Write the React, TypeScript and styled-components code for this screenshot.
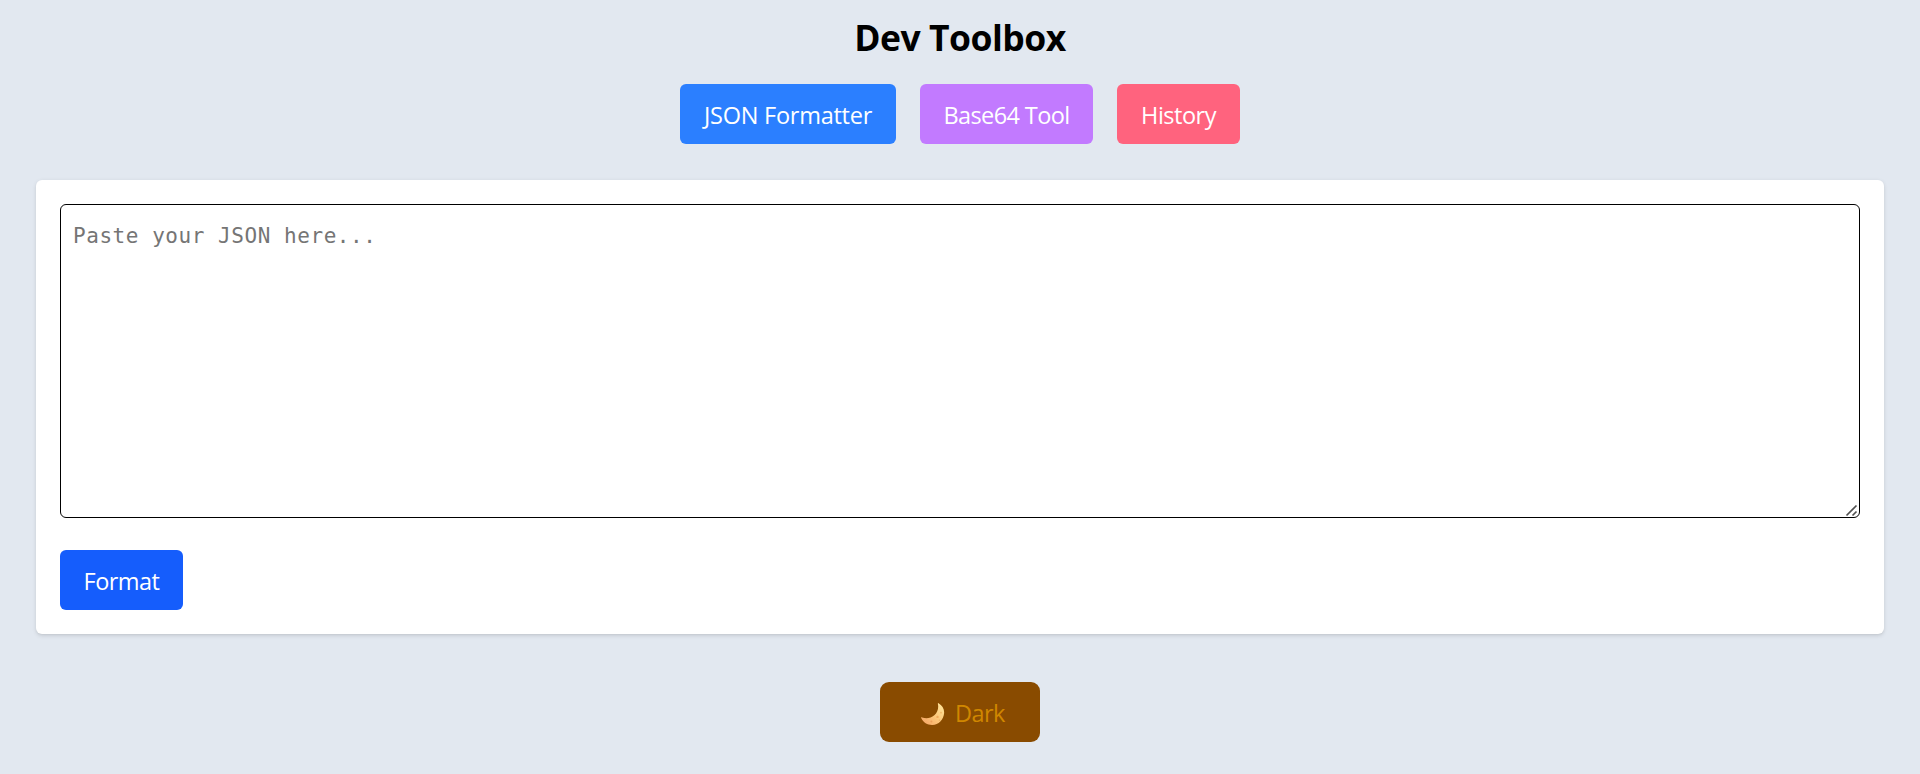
import React, { useState } from "react";
import styled, { createGlobalStyle } from "styled-components";

const GlobalStyle = createGlobalStyle`
  *, *::before, *::after { box-sizing: border-box; }
  html { background: #e2e8f0; }
  body {
    margin: 0;
    font-family: "Segoe UI", "Open Sans", "Noto Sans", sans-serif;
    font-size: 23.5px;
    line-height: 36px;
    color: #000;
  }
  button, textarea { font: inherit; margin: 0; }
`;

const Page = styled.div`
  display: flex;
  flex-direction: column;
  min-height: 774px;
  padding: 10px 36px 32px;
  background: #e2e8f0;
`;

const Title = styled.h1`
  margin: 0 0 20px;
  text-align: center;
  font-size: 35.5px;
  font-weight: 700;
  line-height: 54px;
  letter-spacing: -0.5px;
`;

const Tabs = styled.nav`
  display: flex;
  justify-content: center;
  gap: 24px;
  margin-bottom: 36px;
`;

const Button = styled.button<{ $bg: string; $width: number; $track?: number }>`
  display: flex;
  align-items: center;
  justify-content: center;
  width: ${(p) => p.$width}px;
  height: 60px;
  padding: 2px 0 0;
  border: 0;
  border-radius: 6px;
  background: ${(p) => p.$bg};
  color: #fff;
  letter-spacing: ${(p) => p.$track ?? 0}px;
  white-space: nowrap;
  cursor: pointer;
`;

const Card = styled.main`
  height: 454px;
  padding: 24px;
  border-radius: 6px;
  background: #fff;
  box-shadow: 0 1.5px 4.5px rgba(0, 0, 0, 0.1), 0 1.5px 3px -1.5px rgba(0, 0, 0, 0.1);
`;

const EditorFrame = styled.div`
  position: relative;
  margin-bottom: 32px;
`;

const Editor = styled.textarea`
  display: block;
  width: 100%;
  height: 314px;
  padding: 13px 12px 12px;
  border: 1px solid #000;
  border-radius: 6px;
  outline: none;
  resize: none;
  background: #fff;
  && {
    font-family: Consolas, "DejaVu Sans Mono", monospace;
    font-size: 21px;
    line-height: 36px;
    letter-spacing: 0.55px;
  }
  &::placeholder { color: #757575; opacity: 1; }
`;

const Grip = styled.svg`
  position: absolute;
  right: 2px;
  bottom: 1px;
  width: 13px;
  height: 13px;
  pointer-events: none;
`;

const Footer = styled.footer`
  display: flex;
  justify-content: center;
  margin-top: 48px;
`;

const ThemeButton = styled(Button)`
  justify-content: flex-start;
  padding-left: 41px;
  gap: 10px;
  border-radius: 9px;
  color: #d08700;
`;

const MoonSvg = styled.svg`
  display: block;
  width: 24px;
  height: 26px;
`;

const Moon = () => (
  <MoonSvg viewBox="0 0 24 26" aria-hidden="true">
    <defs>
      <linearGradient id="moon" x1="0.2" y1="1" x2="0.9" y2="0.2">
        <stop offset="0" stopColor="#f6a868" />
        <stop offset="0.5" stopColor="#fcc678" />
        <stop offset="1" stopColor="#ffdf94" />
      </linearGradient>
    </defs>
    <path
      d="M17.5 3.2C21.2 5.2 23.5 8.8 23.1 13.2C22.6 19.6 17.6 24.9 11.3 25C6.4 25.1 2.3 22.5.3 18.3C-.1 17.4.3 17.1 1.1 17.4C5.2 18.9 9.8 18.3 13.3 15.3C16.6 12.5 17.8 8 16.9 3.9C16.8 3.2 17 2.9 17.5 3.2Z"
      fill="url(#moon)"
    />
    <circle cx="16.5" cy="16.9" r="1.2" fill="#f0ab5d" />
    <circle cx="20" cy="12.7" r="0.9" fill="#f3b765" />
    <circle cx="10.4" cy="21.5" r="1" fill="#eca05a" />
    <circle cx="18.5" cy="20.2" r="0.8" fill="#f0b064" />
  </MoonSvg>
);

export default function App() {
  const [text, setText] = useState("");

  const format = () => {
    try {
      setText(JSON.stringify(JSON.parse(text), null, 2));
    } catch {
      setText(text);
    }
  };

  return (
    <>
      <GlobalStyle />
      <Page>
        <Title>Dev Toolbox</Title>
        <Tabs>
          <Button $bg="#2b7fff" $width={216} $track={-0.25}>JSON Formatter</Button>
          <Button $bg="#c27aff" $width={173} $track={-0.6}>Base64 Tool</Button>
          <Button $bg="#ff637e" $width={123} $track={-0.5}>History</Button>
        </Tabs>
        <Card>
          <EditorFrame>
            <Editor
              placeholder="Paste your JSON here..."
              value={text}
              onChange={(e) => setText(e.target.value)}
              spellCheck={false}
            />
            <Grip viewBox="0 0 13 13" aria-hidden="true">
              <path d="M1.5 11.5 11.5 1.5M7.5 11.5 11.5 7.5" stroke="#505050" strokeWidth="1.7" fill="none" />
            </Grip>
          </EditorFrame>
          <Button $bg="#155dfc" $width={123} $track={-0.55} onClick={format}>Format</Button>
        </Card>
        <Footer>
          <ThemeButton $bg="#894b00" $width={160} $track={-0.6}>
            <Moon />
            <span>Dark</span>
          </ThemeButton>
        </Footer>
      </Page>
    </>
  );
}
